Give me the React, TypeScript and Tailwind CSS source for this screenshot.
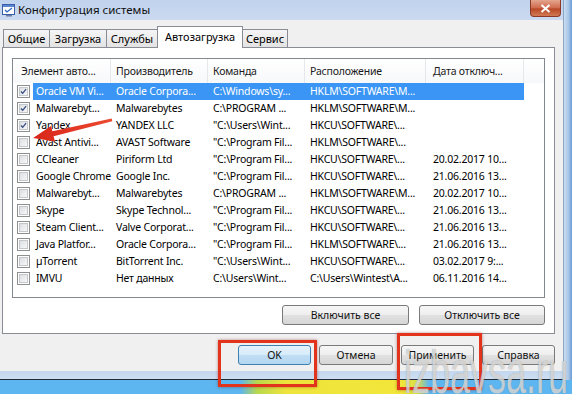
import React from "react";

type Row = { c: boolean; a: string; b: string; cmd: string; loc: string; d: string; sel?: boolean };

const rows: Row[] = [
  { c: true, a: "Oracle VM Vi...", b: "Oracle Corpora...", cmd: "C:\\Windows\\sy...", loc: "HKLM\\SOFTWARE\\M...", d: "", sel: true },
  { c: true, a: "Malwarebyt...", b: "Malwarebytes", cmd: "C:\\PROGRAM ...", loc: "HKLM\\SOFTWARE\\M...", d: "" },
  { c: true, a: "Yandex", b: "YANDEX LLC", cmd: "\"C:\\Users\\Wint...", loc: "HKCU\\SOFTWARE\\...", d: "" },
  { c: false, a: "Avast Antivi...", b: "AVAST Software", cmd: "\"C:\\Program Fil...", loc: "HKLM\\SOFTWARE\\...", d: "" },
  { c: false, a: "CCleaner", b: "Piriform Ltd", cmd: "\"C:\\Program Fil...", loc: "HKCU\\SOFTWARE\\...", d: "20.02.2017 10..." },
  { c: false, a: "Google Chrome", b: "Google Inc.", cmd: "\"C:\\Program Fil...", loc: "HKCU\\SOFTWARE\\...", d: "21.06.2016 13..." },
  { c: false, a: "Malwarebyt...", b: "Malwarebytes", cmd: "C:\\PROGRAM ...", loc: "HKLM\\SOFTWARE\\M...", d: "20.02.2017 10..." },
  { c: false, a: "Skype", b: "Skype Technol...", cmd: "\"C:\\Program Fil...", loc: "HKCU\\SOFTWARE\\...", d: "21.06.2016 13..." },
  { c: false, a: "Steam Client...", b: "Valve Corporat...", cmd: "\"C:\\Program Fil...", loc: "HKCU\\SOFTWARE\\...", d: "21.06.2016 13..." },
  { c: false, a: "Java Platfor...", b: "Oracle Corpora...", cmd: "\"C:\\Program Fil...", loc: "HKLM\\SOFTWARE\\...", d: "21.06.2016 13..." },
  { c: false, a: "µTorrent", b: "BitTorrent Inc.", cmd: "\"C:\\Users\\Wint...", loc: "HKCU\\SOFTWARE\\...", d: "03.02.2017 9:..." },
  { c: false, a: "IMVU", b: "Нет данных", cmd: "C:\\Users\\Wint...", loc: "C:\\Users\\Wintest\\A...", d: "06.11.2016 14..." },
];

function Checkbox({ checked }: { checked: boolean }) {
  return (
    <div className="w-[13px] h-[13px] border border-[#8e8f8f] bg-white p-px">
      <div className="w-full h-full border border-[#c4c8cc] bg-[linear-gradient(135deg,#dcdfe2,#f7f7f7)] flex items-center justify-center">
        {checked && (
          <svg width="9" height="9" viewBox="0 0 9 9">
            <path d="M1.2 4.4 L3.5 6.8 L7.8 1.4" stroke="#3a4f86" strokeWidth="1.7" fill="none" />
          </svg>
        )}
      </div>
    </div>
  );
}

function Btn({ children, w, primary }: { children: React.ReactNode; w: string; primary?: boolean }) {
  return (
    <div
      className={
        primary
          ? `${w} h-[20px] rounded-[3px] border border-[#3c7fb1] bg-[linear-gradient(#e6f3fc,#d6ebfa_50%,#c0def5_50%,#b4d6f0)] flex items-center justify-center text-[10.5px] text-[#111]`
          : `${w} h-[20px] rounded-[3px] border border-[#7a7a7a] bg-[linear-gradient(#f6f6f6,#eeeeee_50%,#e1e1e1_50%,#d6d6d6)] flex items-center justify-center text-[10.5px] text-[#111]`
      }
    >
      {children}
    </div>
  );
}

export default function App() {
  return (
    <div className="relative w-[572px] h-[394px] overflow-hidden font-['Noto_Sans',sans-serif] text-[10.5px] text-black leading-none">
      {/* window */}
      <div className="flex h-[380px]">
        <div className="w-[563px] flex flex-col">
          {/* title bar */}
          <div className="h-[20px] flex items-center bg-[linear-gradient(#c0d3ed,#cbdaf0)] relative">
            <svg width="14" height="13" viewBox="0 0 14 13" className="ml-[2px]">
              <rect x="0.5" y="0.5" width="12" height="10" fill="#fff" stroke="#3a5fa8" />
              <rect x="1" y="1" width="11" height="2" fill="#5a86cf" />
              <path d="M3 6 L5 8 L10 4" stroke="#2b64c0" strokeWidth="1.2" fill="none" />
              <rect x="4" y="11" width="6" height="1.5" fill="#6b7fa6" />
            </svg>
            <span className="ml-[2px] text-[11.5px] text-[#101010]">Конфигурация системы</span>
            <div className="absolute left-[530px] top-0 w-[31px] h-[17px] rounded-b-[4px] border border-[#8b3a28] border-t-0 bg-[linear-gradient(#e4a58e,#cf6a4d_50%,#b84726_55%,#d27a55)] flex items-center justify-center">
              <svg width="11" height="9" viewBox="0 0 11 9">
                <path d="M1.5 1 L9.5 8 M9.5 1 L1.5 8" stroke="#fff" strokeWidth="2" />
              </svg>
            </div>
          </div>
          {/* body */}
          <div className="flex-1 bg-[#f0f0f0] pl-[2px] pr-[8px] pt-[6px] flex flex-col">
            {/* tabs */}
            <div className="h-[21px] flex items-end pl-[1px] relative z-10 text-[11px]">
              <div className="w-[47px] h-[18px] border border-b-0 border-[#898c95] bg-[linear-gradient(#f5f5f5,#e3e3e3)] flex items-center justify-center">Общие</div>
              <div className="-ml-px w-[58px] h-[18px] border border-b-0 border-[#898c95] bg-[linear-gradient(#f5f5f5,#e3e3e3)] flex items-center justify-center">Загрузка</div>
              <div className="-ml-px w-[52px] h-[18px] border border-b-0 border-[#898c95] bg-[linear-gradient(#f5f5f5,#e3e3e3)] flex items-center justify-center">Службы</div>
              <div className="-ml-px w-[86px] h-[22px] -mb-px border border-b-0 border-[#898c95] bg-white flex items-center justify-center pb-[3px]">Автозагрузка</div>
              <div className="-ml-px w-[46px] h-[18px] border border-b-0 border-[#898c95] bg-[linear-gradient(#f5f5f5,#e3e3e3)] flex items-center justify-center">Сервис</div>
            </div>
            {/* panel */}
            <div className="h-[287px] border border-[#898c95] bg-white pl-[9px] pr-[9px] pt-[10px] flex flex-col">
              <div className="h-[240px] border border-[#828790] bg-white flex flex-col tracking-[-0.2px]">
                {/* header */}
                <div className="h-[24px] flex bg-[linear-gradient(#ffffff,#f7f8fa)] text-[#1a1a1a]">
                  <div className="w-[98px] pl-[8px] flex items-center border-r border-[#e5e7ea] whitespace-nowrap">Элемент авто...</div>
                  <div className="w-[97px] pl-[5px] flex items-center border-r border-[#e5e7ea] whitespace-nowrap">Производитель</div>
                  <div className="w-[97px] pl-[5px] flex items-center border-r border-[#e5e7ea] whitespace-nowrap">Команда</div>
                  <div className="w-[121px] pl-[5px] flex items-center border-r border-[#e5e7ea] whitespace-nowrap">Расположение</div>
                  <div className="w-[98px] pl-[7px] flex items-center border-r border-[#e5e7ea] whitespace-nowrap">Дата отключ...</div>
                  <div className="flex-1" />
                </div>
                {/* rows */}
                {rows.map((r, i) => (
                  <div key={i} className="h-[17px] flex items-center">
                    <div className="w-[20px] pl-[4px] flex items-center">
                      <Checkbox checked={r.c} />
                    </div>
                    <div className={r.sel ? "w-[491px] h-full flex items-center bg-[#3a95f4] text-white" : "w-[491px] h-full flex items-center"}>
                      <div className="w-[78px] pl-[3px] whitespace-nowrap">{r.a}</div>
                      <div className="w-[97px] pl-[5px] whitespace-nowrap">{r.b}</div>
                      <div className="w-[97px] pl-[5px] whitespace-nowrap">{r.cmd}</div>
                      <div className="w-[121px] pl-[5px] whitespace-nowrap">{r.loc}</div>
                      <div className="w-[98px] pl-[7px] whitespace-nowrap">{r.d}</div>
                    </div>
                  </div>
                ))}
              </div>
              <div className="mt-[7px] flex justify-end gap-[10px]">
                <Btn w="w-[127px]">Включить все</Btn>
                <Btn w="w-[126px]">Отключить все</Btn>
              </div>
            </div>
            {/* bottom buttons */}
            <div className="mt-[11px] flex justify-end gap-[8px]">
              <Btn w="w-[73px]" primary>OK</Btn>
              <Btn w="w-[74px]">Отмена</Btn>
              <Btn w="w-[73px]">Применить</Btn>
              <Btn w="w-[73px]">Справка</Btn>
            </div>
          </div>
          {/* bottom frame */}
          <div className="h-[9px] bg-[linear-gradient(#c2d6ee,#cfdff2)] border-b border-[#1f2b38]" />
        </div>
        <div className="w-[9px] border-l border-[#8da6c4] bg-[linear-gradient(90deg,#cadcf1,#aac7e8_55%,#6a9bd6)]" />
      </div>
      {/* desktop */}
      <div className="h-[14px] bg-[linear-gradient(90deg,#5db6ef_0%,#5db6ef_42%,#b9d84c_45%,#efe43c_50%,#f2e63a_70%,#d9e04a_73%,#5db6ef_75%,#5db6ef_100%)]" />

      {/* arrow */}
      <svg className="absolute left-0 top-0 pointer-events-none" width="572" height="394" viewBox="0 0 572 394">
        <defs>
          <linearGradient id="ar" x1="0" y1="0" x2="1" y2="0">
            <stop offset="0" stopColor="#d8261a" />
            <stop offset="1" stopColor="#ec4a30" />
          </linearGradient>
        </defs>
        <path d="M33 138 L55 141.5 L53.6 136.3 L112.3 121.2 L111.7 118.6 L52.4 131.2 L51 126 Z" fill="url(#ar)" />
      </svg>

      {/* red highlight boxes */}
      <div className="absolute left-[218px] top-[340px] w-[99px] h-[47px] border-[3px] border-[#e2341c] shadow-[0_0_3px_rgba(120,0,0,0.45)]" />
      <div className="absolute left-[397px] top-[333px] w-[85px] h-[57px] border-[3px] border-[#e2341c] shadow-[0_0_3px_rgba(120,0,0,0.45)]" />

      {/* watermark */}
      <div className="absolute left-[404px] top-[341px] text-[62px] leading-[62px] font-['Liberation_Sans',sans-serif] text-[#f2f2f2]/70 scale-x-[0.58] origin-left whitespace-nowrap [text-shadow:0_0_1px_rgba(80,80,80,0.55)]">
        izbavsa.ru
      </div>
    </div>
  );
}
